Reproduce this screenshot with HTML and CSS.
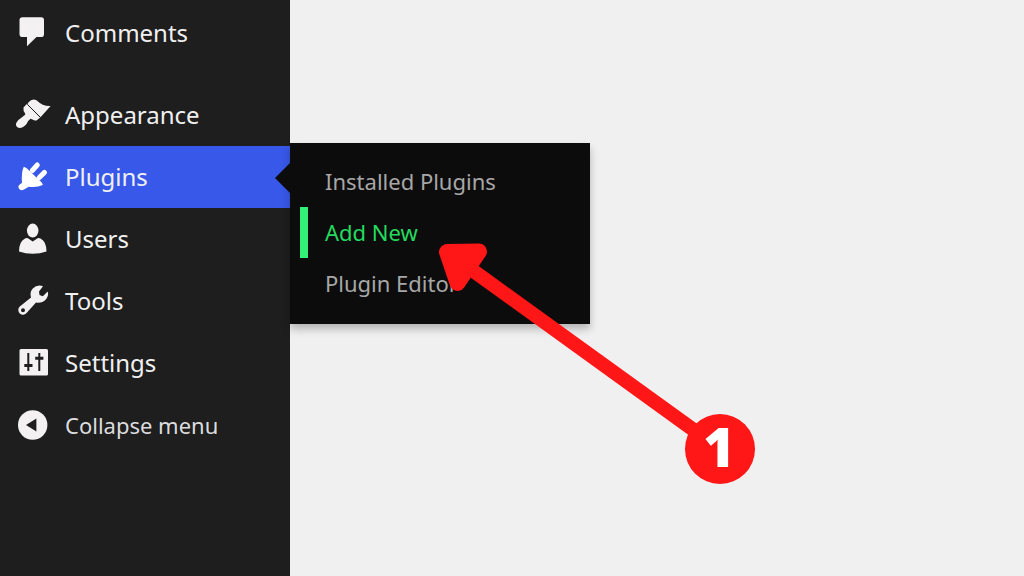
FILE: index.html
```html
<!DOCTYPE html>
<html lang="en">
<head>
<meta charset="utf-8">
<meta name="viewport" content="width=device-width, initial-scale=1">
<title>Plugins menu</title>
<link rel="stylesheet" href="styles.css">
</head>
<body>
<div class="page">
  <nav class="sidebar" aria-label="Main menu">
    <ul class="menu">
      <li class="menu-item">
        <a class="menu-link" href="#comments">
          <svg class="icon" viewBox="0 0 36 36" aria-hidden="true"><path d="M7.500 2.300H26.200Q29 2.300 29 5.100V19.200Q29 22 26.200 22H21.500L12 31.300V22H7.500Q4.500 22 4.500 19.200V5.100Q4.500 2.300 7.500 2.300Z"/></svg>
          <span>Comments</span>
        </a>
      </li>
      <li class="menu-item menu-item-spaced">
        <a class="menu-link" href="#appearance">
          <svg class="icon" viewBox="0 0 36 36" aria-hidden="true"><path d="M13.600 5.200Q17 1 21.500 3.200Q28 9.500 35.600 9L25.500 20.300L12.300 7.200Z"/><path d="M8.500 10.500L11.800 7L25.200 20.500L21.500 23.400Q19.500 24 17.500 22.500L15.500 21.800Q12.500 24 11.500 27Q7.500 31.500 3.500 30.800Q0.200 29.500 1.200 26Q3 22.500 7 20.200Q10.500 18 10.300 16.800Q7.800 13.500 8.500 10.500Z"/><path class="icon-seam" d="M12.400 7.400L25.200 20.200"/></svg>
          <span>Appearance</span>
        </a>
      </li>
      <li class="menu-item menu-item-current">
        <a class="menu-link" href="#plugins" aria-current="page">
          <svg class="icon" viewBox="0 0 36 36" aria-hidden="true"><path d="M8.800 7.800Q10.500 8.200 12 9.500L26 22.800Q27.800 24.500 27.800 26Q22 28.800 13.800 27.800L9 30.600Q6.500 32.200 4.500 30.300Q2.200 27.500 4.500 25.800L7 23.800Q6.200 13 8.800 7.800Z"/><path class="icon-stroke" d="M17.300 11.500L22.300 6M24.300 18.500L29.500 13.400"/></svg>
          <span>Plugins</span>
        </a>
        <ul class="submenu">
          <li><a class="submenu-link" href="#installed">Installed Plugins</a></li>
          <li><a class="submenu-link submenu-link-active" href="#add-new">Add New</a></li>
          <li><a class="submenu-link" href="#editor">Plugin Editor</a></li>
        </ul>
      </li>
      <li class="menu-item">
        <a class="menu-link" href="#users">
          <svg class="icon" viewBox="0 0 36 36" aria-hidden="true"><ellipse cx="17.700" cy="9.600" rx="5.800" ry="7"/><path d="M10 17.500Q12.500 16.500 14 18L17.700 20.500L21.500 18Q23 16.500 25.500 17.500Q31.500 20.500 31.500 30.500Q25 32.800 17.700 32.800Q10.500 32.800 4 30.500Q4 20.500 10 17.500Z"/></svg>
          <span>Users</span>
        </a>
      </li>
      <li class="menu-item">
        <a class="menu-link" href="#tools">
          <svg class="icon" viewBox="0 0 36 36" aria-hidden="true"><path fill-rule="evenodd" d="M28 3.200Q22 1.200 17.800 5.600Q14.500 9.500 16 14.500L4.800 23.500A4.700 4.700 0 1 0 11.800 29.700L21 19.500Q27 20.500 30.800 16.500Q34 12.500 32.700 8.500L27.800 13.200L24.500 12L24 8.500ZM8 25.200A2 2 0 1 1 8 29.200A2 2 0 1 1 8 25.200Z"/></svg>
          <span>Tools</span>
        </a>
      </li>
      <li class="menu-item">
        <a class="menu-link" href="#settings">
          <svg class="icon" viewBox="0 0 36 36" aria-hidden="true"><rect x="4.500" y="4" width="28.500" height="26.500" rx="1.500"/><path class="icon-cut-line" d="M13.300 8V26M24.300 8V26"/><path class="icon-cut-bar" d="M9.300 20.500H17.500M20.200 13.200H28.400"/></svg>
          <span>Settings</span>
        </a>
      </li>
      <li class="menu-item">
        <button class="menu-link" type="button">
          <svg class="icon" viewBox="0 0 36 36" aria-hidden="true"><circle cx="17.700" cy="18" r="14.700"/><path class="icon-cut" d="M11 18L21.400 11.600V24.400Z"/></svg>
          <span class="collapse-label">Collapse menu</span>
        </button>
      </li>
    </ul>
  </nav>
  <main class="content"></main>
  <svg class="annotation" viewBox="0 0 320 244" role="img" aria-label="Step 1: Add New">
    <path class="annotation-shaft" d="M31 25L283 207"/>
    <path class="annotation-head" d="M10 10L42 9.500L20.500 41Z"/>
    <circle cx="283" cy="207" r="35"/>
    <text class="annotation-number" x="282" y="225">1</text>
  </svg>
</div>
</body>
</html>
```
FILE: styles.css
```css
* {
  box-sizing: border-box;
}

body {
  margin: 0;
  background: #f0f0f0;
  font-family: "Noto Sans", "Open Sans", sans-serif;
}

.page {
  position: relative;
  display: flex;
  min-height: 100vh;
}

.sidebar {
  flex: 0 0 290px;
  padding-top: 2px;
  background: #1e1e1e;
}

.content {
  flex: 1;
}

.menu,
.submenu {
  margin: 0;
  padding: 0;
  list-style: none;
}

.menu-item {
  position: relative;
}

.menu-item-spaced {
  margin-top: 20px;
}

.menu-link {
  display: flex;
  align-items: center;
  gap: 14px;
  width: 100%;
  height: 62px;
  padding: 0 15px;
  border: 0;
  background: none;
  color: #f0f0f1;
  font-family: inherit;
  font-size: 24px;
  line-height: 32px;
  text-align: left;
  text-decoration: none;
  cursor: pointer;
}

.menu-item-current > .menu-link {
  background: #3858e9;
}

.menu-item-current::after {
  content: "";
  position: absolute;
  top: 17px;
  right: 0;
  border: solid transparent;
  border-width: 15px 15px 15px 0;
  border-right-color: #0c0c0c;
}

.collapse-label {
  color: #dcdcde;
  font-size: 22px;
}

.icon {
  flex: none;
  width: 36px;
  height: 36px;
  fill: #f3f1f1;
}

.menu-item-current .icon {
  fill: #fff;
}

.icon-stroke {
  stroke: #fff;
  stroke-width: 5;
  stroke-linecap: round;
}

.icon-cut {
  fill: #1e1e1e;
}

.icon-seam {
  stroke: #1e1e1e;
  stroke-width: 1;
}

.icon-cut-line {
  stroke: #1e1e1e;
  stroke-width: 2;
}

.icon-cut-bar {
  stroke: #1e1e1e;
  stroke-width: 3;
}

.submenu {
  position: absolute;
  top: -3px;
  left: 100%;
  width: 300px;
  padding: 13px 0 15px 10px;
  background: #0c0c0c;
  box-shadow: 0 5px 8px rgba(0, 0, 0, 0.25);
}

.submenu-link {
  display: block;
  padding-left: 17px;
  border-left: 8px solid transparent;
  color: #a7a7a7;
  font-size: 22px;
  line-height: 51px;
  text-decoration: none;
}

.submenu-link-active {
  border-left-color: #33f078;
  color: #24da5e;
}

.annotation {
  position: absolute;
  top: 242px;
  left: 437px;
  width: 320px;
  height: 244px;
  fill: #ff1616;
  pointer-events: none;
}

.annotation-shaft {
  stroke: #ff1616;
  stroke-width: 14;
}

.annotation-head {
  stroke: #ff1616;
  stroke-width: 16;
  stroke-linejoin: round;
}

.annotation-number {
  fill: #fff;
  font-family: "Open Sans", sans-serif;
  font-size: 54px;
  font-weight: 800;
  text-anchor: middle;
}
```
